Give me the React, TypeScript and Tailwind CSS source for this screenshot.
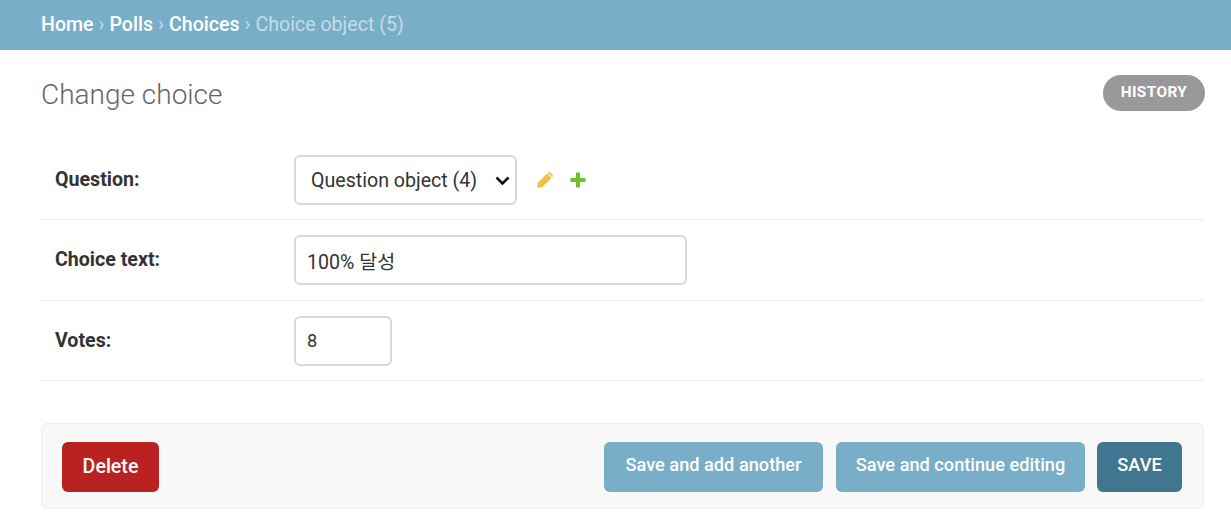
const font = { fontFamily: "Roboto, 'Noto Sans CJK KR', sans-serif" };

function Breadcrumbs() {
  return (
    <div className="flex h-[50px] items-center bg-[#79aec8] px-[41px] text-[19.6px] text-[#c4dce8]">
      <a className="font-medium text-white">Home</a>
      <span className="px-[5px]">›</span>
      <a className="font-medium text-white">Polls</a>
      <span className="px-[5px]">›</span>
      <a className="font-medium text-white">Choices</a>
      <span className="px-[5px]">›</span>
      <span>Choice object (5)</span>
    </div>
  );
}

function FormRow({ label, children, height }: { label: string; children: React.ReactNode; height: string }) {
  return (
    <div className={`flex items-center border-b border-[#eeeeee] pl-[14px] ${height}`}>
      <label className="w-[239px] text-[19.6px] font-bold text-[#333333]">{label}</label>
      {children}
    </div>
  );
}

export default function App() {
  return (
    <div className="h-[512px] w-[1231px] overflow-hidden bg-white" style={font}>
      <Breadcrumbs />
      <div className="pl-[41px] pr-[27px]">
        <div className="flex h-[90px] items-start justify-between">
          <h1 className="mt-[27px] text-[28px] font-light leading-[36px] text-[#666666]">Change choice</h1>
          <a className="mr-[-1px] mt-[25px] flex h-[36px] w-[102px] items-center justify-center rounded-[18px] bg-[#999999] pb-[1px] text-[15.4px] font-bold tracking-[0.4px] text-white">
            HISTORY
          </a>
        </div>
        <FormRow label="Question:" height="h-[80px]">
          <div className="relative h-[50px] w-[223px]">
            <select
              defaultValue="4"
              className="h-full w-full appearance-none rounded-[6px] border-2 border-[#d8d8d8] bg-white pl-[15px] pr-[30px] pt-[3px] text-[19.6px] text-[#333333]"
            >
              <option value="4">Question object (4)</option>
            </select>
            <svg className="pointer-events-none absolute right-[7px] top-[21px]" width="15" height="9" viewBox="0 0 15 9">
              <path d="M1.5 1.5 7.5 7.5 13.5 1.5" fill="none" stroke="#111111" strokeWidth="2.6" />
            </svg>
          </div>
          <svg className="ml-[19px]" width="18" height="18" viewBox="0 0 18 18">
            <path d="M1 17 2 11.5 11 2.5 15.5 7 6.5 16z M12.2 1.4a1.4 1.4 0 0 1 2 0l2.4 2.4a1.4 1.4 0 0 1 0 2l-.4.5-4.5-4.5z" fill="#efc04a" />
          </svg>
          <svg className="ml-[16px]" width="16" height="16" viewBox="0 0 16 16">
            <path d="M6 .5h4v5.5h5.500v4H10v5.500H6V10H.5V6H6z" fill="#70bf2b" />
          </svg>
        </FormRow>
        <FormRow label="Choice text:" height="h-[81px]">
          <input
            defaultValue="100% 달성"
            className="h-[50px] w-[393px] rounded-[6px] border-2 border-[#d8d8d8] px-[11px] text-[19.6px] text-[#333333]"
          />
        </FormRow>
        <FormRow label="Votes:" height="h-[80px]">
          <input
            defaultValue="8"
            className="h-[50px] w-[98px] rounded-[6px] border-2 border-[#d8d8d8] px-[11px] text-[18.2px] text-[#333333]"
          />
        </FormRow>
        <div className="mt-[42px] flex h-[86px] items-center justify-between rounded-[6px] border border-[#eeeeee] bg-[#f8f8f8] pl-[20px] pr-[21px] pt-[2px]">
          <a className="flex h-[50px] w-[97px] items-center justify-center rounded-[6px] bg-[#ba2121] text-[19.6px] font-medium text-white">
            Delete
          </a>
          <div className="flex">
            <a className="flex h-[50px] w-[219px] items-center justify-center rounded-[6px] bg-[#79aec8] pb-[5px] text-[18.2px] font-medium text-white">
              Save and add another
            </a>
            <a className="ml-[13px] flex h-[50px] w-[249px] items-center justify-center rounded-[6px] bg-[#79aec8] pb-[5px] text-[18.2px] font-medium text-white">
              Save and continue editing
            </a>
            <a className="ml-[12px] flex h-[50px] w-[85px] items-center justify-center rounded-[6px] bg-[#417690] pb-[5px] text-[18.2px] font-medium text-white">
              SAVE
            </a>
          </div>
        </div>
      </div>
    </div>
  );
}
